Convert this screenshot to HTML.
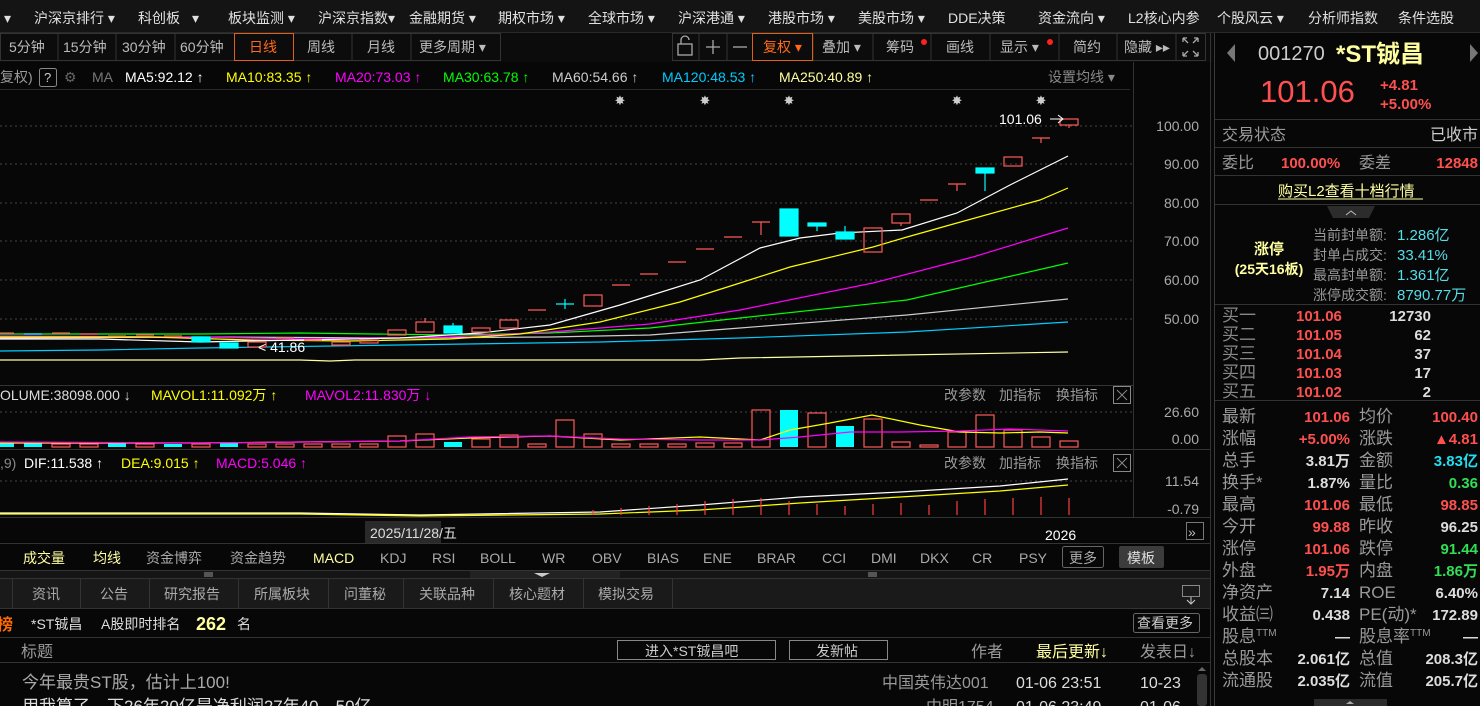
<!DOCTYPE html>
<html><head><meta charset="utf-8"><style>
html,body{margin:0;padding:0;background:#070707;width:1480px;height:706px;overflow:hidden}
svg{display:block}
text{font-family:"Liberation Sans","Noto Sans CJK SC",sans-serif}
</style></head><body>
<svg width="1480" height="706" viewBox="0 0 1480 706" xmlns="http://www.w3.org/2000/svg">
<rect width="1480" height="706" fill="#070707"/>
<rect x="0" y="0" width="1480" height="33" fill="#141414"/>
<line x1="0" y1="32.5" x2="1480" y2="32.5" stroke="#2a2a2a"/>
<g font-size="14" fill="#e0e0e0">
<text x="4" y="23">▾</text>
<text x="34" y="23">沪深京排行 ▾</text><text x="138" y="23">科创板</text><text x="192" y="23">▾</text>
<text x="228" y="23">板块监测 ▾</text><text x="318" y="23">沪深京指数▾</text><text x="409" y="23">金融期货 ▾</text>
<text x="498" y="23">期权市场 ▾</text><text x="588" y="23">全球市场 ▾</text><text x="678" y="23">沪深港通 ▾</text>
<text x="768" y="23">港股市场 ▾</text><text x="858" y="23">美股市场 ▾</text><text x="948" y="23">DDE决策</text>
<text x="1038" y="23">资金流向 ▾</text><text x="1128" y="23">L2核心内参</text><text x="1217" y="23">个股风云 ▾</text>
<text x="1308" y="23">分析师指数</text><text x="1398" y="23">条件选股</text>
</g>
<rect x="0" y="33" width="1213" height="29" fill="#0c0c0c"/>
<g fill="none" stroke="#333">
<rect x="0.5" y="33.5" width="500" height="27"/>
<line x1="58" y1="33" x2="58" y2="61"/><line x1="116" y1="33" x2="116" y2="61"/><line x1="175" y1="33" x2="175" y2="61"/>
<line x1="352" y1="33" x2="352" y2="61"/><line x1="411" y1="33" x2="411" y2="61"/>
<rect x="672.5" y="33.5" width="533" height="27"/>
<line x1="699" y1="33" x2="699" y2="61"/><line x1="727" y1="33" x2="727" y2="61"/>
<line x1="813" y1="33" x2="813" y2="61"/><line x1="873" y1="33" x2="873" y2="61"/><line x1="931" y1="33" x2="931" y2="61"/>
<line x1="990" y1="33" x2="990" y2="61"/><line x1="1059" y1="33" x2="1059" y2="61"/><line x1="1117" y1="33" x2="1117" y2="61"/><line x1="1176" y1="33" x2="1176" y2="61"/>
</g>
<rect x="234.5" y="33.5" width="59" height="27" fill="none" stroke="#e0601a"/>
<rect x="752.5" y="33.5" width="60" height="27" fill="none" stroke="#e0601a"/>
<g font-size="14" fill="#bbb">
<text x="9" y="52">5分钟</text><text x="63" y="52">15分钟</text><text x="122" y="52">30分钟</text><text x="180" y="52">60分钟</text>
<text x="249" y="52" fill="#ff6a1a">日线</text><text x="307" y="52">周线</text><text x="367" y="52">月线</text><text x="419" y="52">更多周期 ▾</text>
<text x="763" y="52" fill="#ff6a1a">复权 ▾</text><text x="822" y="52">叠加 ▾</text><text x="886" y="52">筹码</text>
<text x="946" y="52">画线</text><text x="1000" y="52">显示 ▾</text><text x="1073" y="52">简约</text><text x="1124" y="52">隐藏 ▸▸</text>
</g>
<circle cx="924" cy="42" r="3" fill="#ff2020"/><circle cx="1050" cy="42" r="3" fill="#ff2020"/>
<g stroke="#aaa" fill="none" stroke-width="1.3">
<rect x="678" y="44" width="14" height="11"/><path d="M681 44 v-4 a4 4 0 0 1 8 0"/>
<path d="M713 40 v14 M706 47 h14"/><path d="M733 47 h14"/>
<path d="M1183 38 l5 5 M1183 38 h4 M1183 38 v4 M1198 38 l-5 5 M1198 38 h-4 M1198 38 v4 M1183 56 l5 -5 M1183 56 h4 M1183 56 v-4 M1198 56 l-5 -5 M1198 56 h-4 M1198 56 v-4"/>
</g>
<g font-size="14">
<text x="0" y="82" fill="#999">复权)</text>
<rect x="39.5" y="68.5" width="17" height="18" fill="none" stroke="#888" rx="2"/><text x="44" y="82" fill="#ccc" font-size="13">?</text>
<text x="64" y="82" fill="#666">⚙</text><text x="92" y="82" fill="#777">MA</text>
<text x="125" y="82" fill="#fff">MA5:92.12 ↑</text>
<text x="226" y="82" fill="#ffff00">MA10:83.35 ↑</text>
<text x="335" y="82" fill="#ff00ff">MA20:73.03 ↑</text>
<text x="443" y="82" fill="#00ff00">MA30:63.78 ↑</text>
<text x="552" y="82" fill="#cccccc">MA60:54.66 ↑</text>
<text x="662" y="82" fill="#00ccff">MA120:48.53 ↑</text>
<text x="779" y="82" fill="#ffffa0">MA250:40.89 ↑</text>
<text x="1048" y="82" fill="#888">设置均线 ▾</text>
</g>
<line x1="0" y1="89.5" x2="1130" y2="89.5" stroke="#2a2a2a"/>
<g stroke="#444" stroke-dasharray="2 3">
<line x1="0" y1="126" x2="1133" y2="126"/><line x1="0" y1="164" x2="1133" y2="164"/><line x1="0" y1="203" x2="1133" y2="203"/>
<line x1="0" y1="241" x2="1133" y2="241"/><line x1="0" y1="280" x2="1133" y2="280"/><line x1="0" y1="319" x2="1133" y2="319"/>
<line x1="0" y1="412" x2="1133" y2="412"/><line x1="0" y1="481" x2="1133" y2="481"/>
</g>
<g stroke="#333">
<line x1="1133.5" y1="62" x2="1133.5" y2="518"/>
<line x1="0" y1="385.5" x2="1133" y2="385.5"/><line x1="0" y1="449.5" x2="1133" y2="449.5"/><line x1="0" y1="517.5" x2="1133" y2="517.5"/>
<line x1="1133" y1="449.5" x2="1210" y2="449.5"/><line x1="1133" y1="517.5" x2="1210" y2="517.5"/>
<line x1="1210.5" y1="33" x2="1210.5" y2="706"/>
</g>
<line x1="1214.5" y1="33" x2="1214.5" y2="706" stroke="#3a3a3a"/>
<g font-size="14" fill="#aaa" text-anchor="end">
<text x="1199" y="131">100.00</text><text x="1199" y="169">90.00</text><text x="1199" y="208">80.00</text>
<text x="1199" y="246">70.00</text><text x="1199" y="285">60.00</text><text x="1199" y="324">50.00</text>
<text x="1199" y="417">26.60</text><text x="1199" y="444">0.00</text>
<text x="1199" y="486">11.54</text><text x="1199" y="514">-0.79</text>
</g>
<g font-size="13" fill="#ccc" text-anchor="middle">
<text x="620" y="105">✸</text><text x="705" y="105">✸</text><text x="789" y="105">✸</text><text x="957" y="105">✸</text><text x="1041" y="105">✸</text>
</g>
<g fill="none" stroke-width="1.2">
<polyline stroke="#ffffa0" points="0,360 300,360 330,361 355,360 700,360 740,358 1068,352"/>
<polyline stroke="#00ccff" points="0,351 100,350 200,348 400,345 600,342 740,338 907,332 1068,322"/>
<polyline stroke="#cccccc" points="0,338 200,337 400,338 550,337 650,335 740,328 907,315 1068,299"/>
<polyline stroke="#00ff00" points="0,334 200,334 300,333 450,335 550,333 650,328 740,318 907,300 1068,263"/>
<polyline stroke="#ff00ff" points="0,336 200,337 300,339 450,337 550,332 650,324 740,310 873,283 973,257 1068,228"/>
<polyline stroke="#ffff00" points="0,337 150,337 250,340 350,341 450,339 520,334 600,322 680,302 740,283 790,267 873,247 907,237 957,223 1040,200 1068,188"/>
<polyline stroke="#ffffff" points="0,339 100,339 200,342 300,340 400,338 480,333 550,325 620,305 700,280 760,248 800,238 840,233 902,230 957,213 1010,185 1068,156"/>
</g>
<g stroke="#ff5a5a" fill="none" stroke-width="1.2">
<rect x="1060" y="119" width="18" height="6"/><line x1="1069" y1="125" x2="1069" y2="128"/>
<line x1="1032" y1="138" x2="1050" y2="138"/><line x1="1041" y1="138" x2="1041" y2="143"/>
<rect x="1004" y="157" width="18" height="9"/>
<line x1="948" y1="184" x2="966" y2="184"/><line x1="957" y1="184" x2="957" y2="191"/>
<line x1="920" y1="200" x2="938" y2="200"/>
<rect x="892" y="214" width="18" height="9"/><line x1="901" y1="223" x2="901" y2="226"/>
<rect x="864" y="228" width="18" height="24"/>
<line x1="752" y1="222" x2="770" y2="222"/><line x1="761" y1="222" x2="761" y2="235"/>
<line x1="724" y1="237" x2="742" y2="237"/><line x1="696" y1="249" x2="714" y2="249"/>
<line x1="668" y1="262" x2="686" y2="262"/><line x1="640" y1="274" x2="658" y2="274"/>
<line x1="612" y1="285" x2="630" y2="285"/>
<rect x="584" y="295" width="18" height="11"/>
<line x1="528" y1="310" x2="546" y2="310"/>
<rect x="500" y="320" width="18" height="8"/><rect x="472" y="328" width="18" height="4"/>
<rect x="416" y="322" width="18" height="10"/><line x1="425" y1="318" x2="425" y2="322"/>
<rect x="388" y="330" width="18" height="5"/><rect x="360" y="340" width="18" height="3"/><rect x="332" y="342" width="18" height="3"/>
<line x1="304" y1="340" x2="322" y2="340"/><line x1="276" y1="338" x2="294" y2="338"/>
<rect x="248" y="342" width="18" height="5"/>
<line x1="164" y1="336" x2="182" y2="336"/><line x1="136" y1="335" x2="154" y2="335"/><line x1="108" y1="336" x2="126" y2="336"/>
<line x1="80" y1="334" x2="98" y2="334"/><line x1="52" y1="333" x2="70" y2="333"/><line x1="0" y1="333" x2="14" y2="333"/>
</g>
<g fill="#00ffff" stroke="#00ffff" stroke-width="1.2">
<rect x="976" y="168" width="18" height="5"/><line x1="985" y1="173" x2="985" y2="191"/>
<rect x="836" y="232" width="18" height="7"/><line x1="845" y1="226" x2="845" y2="232"/>
<rect x="808" y="223" width="18" height="3"/><line x1="817" y1="226" x2="817" y2="231"/>
<rect x="780" y="209" width="18" height="27"/>
<line x1="556" y1="304" x2="574" y2="304"/><line x1="565" y1="299" x2="565" y2="309"/>
<rect x="444" y="326" width="18" height="7"/><line x1="453" y1="323" x2="453" y2="326"/>
<rect x="220" y="343" width="18" height="5"/><rect x="192" y="337" width="18" height="5"/>
<line x1="24" y1="334" x2="42" y2="334"/>
</g>
<text x="999" y="124" font-size="14" fill="#fff">101.06</text>
<path d="M1050 119 h13 M1058 115 l5 4 l-5 4" stroke="#fff" fill="none"/>
<text x="258" y="352" font-size="14" fill="#fff">&lt; 41.86</text>
<g font-size="14">
<text x="0" y="400" fill="#ddd">OLUME:38098.000 ↓</text>
<text x="151" y="400" fill="#ffff00">MAVOL1:11.092万 ↑</text>
<text x="305" y="400" fill="#ff00ff">MAVOL2:11.830万 ↓</text>
<text x="944" y="400" fill="#999">改参数</text><text x="999" y="400" fill="#999">加指标</text><text x="1056" y="400" fill="#999">换指标</text>
<text x="944" y="468" fill="#999">改参数</text><text x="999" y="468" fill="#999">加指标</text><text x="1056" y="468" fill="#999">换指标</text>
<text x="0" y="468" fill="#888">,9)</text>
<text x="24" y="468" fill="#fff">DIF:11.538 ↑</text>
<text x="121" y="468" fill="#ffff00">DEA:9.015 ↑</text>
<text x="216" y="468" fill="#ff00ff">MACD:5.046 ↑</text>
</g>
<g fill="none" stroke="#888"><rect x="1113.5" y="386.5" width="17" height="17"/><path d="M1117 390 l10 10 M1127 390 l-10 10"/>
<rect x="1113.5" y="454.5" width="17" height="17"/><path d="M1117 458 l10 10 M1127 458 l-10 10"/></g>
<g stroke="#ff5a5a" fill="none" stroke-width="1.2">
<rect x="1060" y="441" width="18" height="6"/><rect x="1032" y="437" width="18" height="10"/><rect x="1004" y="430" width="18" height="17"/>
<rect x="976" y="415" width="18" height="32"/><rect x="948" y="432" width="18" height="15"/><rect x="920" y="445" width="18" height="2"/>
<rect x="892" y="442" width="18" height="5"/><rect x="864" y="419" width="18" height="28"/><rect x="808" y="413" width="18" height="34"/>
<rect x="752" y="410" width="18" height="37"/><rect x="724" y="443" width="18" height="4"/><rect x="696" y="443" width="18" height="4"/>
<rect x="584" y="434" width="18" height="13"/><rect x="556" y="420" width="18" height="27"/><rect x="500" y="435" width="18" height="12"/>
<rect x="472" y="439" width="18" height="8"/><rect x="416" y="434" width="18" height="13"/><rect x="388" y="436" width="18" height="11"/>
<rect x="528" y="444" width="18" height="3"/><rect x="612" y="444" width="18" height="3"/><rect x="640" y="444" width="18" height="3"/><rect x="668" y="444" width="18" height="3"/>
<rect x="360" y="444" width="18" height="3"/><rect x="332" y="444" width="18" height="3"/><rect x="304" y="444" width="18" height="3"/><rect x="276" y="444" width="18" height="3"/><rect x="248" y="444" width="18" height="3"/>
<rect x="192" y="444" width="18" height="3"/><rect x="136" y="444" width="18" height="3"/><rect x="80" y="444" width="18" height="3"/><rect x="52" y="444" width="18" height="3"/>
</g>
<g fill="#00ffff">
<rect x="836" y="426" width="18" height="21"/><rect x="780" y="410" width="18" height="37"/><rect x="444" y="442" width="18" height="5"/>
<rect x="220" y="443" width="18" height="4"/><rect x="164" y="444" width="18" height="3"/><rect x="108" y="443" width="18" height="4"/><rect x="24" y="443" width="18" height="4"/><rect x="0" y="443" width="14" height="4"/>
</g>
<g fill="none" stroke-width="1.2">
<polyline stroke="#ffff00" points="0,443 200,443 300,442 400,441 470,438 550,436 620,440 700,437 760,440 790,430 830,423 872,415 920,425 960,432 1000,433 1040,432 1068,433"/>
<polyline stroke="#ff00ff" points="0,442 200,443 300,442 400,441 470,437 550,436 620,439 700,440 760,440 800,437 850,432 900,432 960,431 1010,429 1068,431"/>
</g>
<g fill="none" stroke-width="1.2">
<polyline stroke="#fff" points="0,513 300,513 420,515 600,512 700,505 800,497 900,492 1000,486 1068,479"/>
<polyline stroke="#ffff00" points="0,514 300,514 420,516 600,514 700,510 800,503 900,497 1000,491 1068,485"/>
</g>
<g stroke="#ff4040" stroke-width="1.2">
<line x1="1069" y1="498" x2="1069" y2="515"/><line x1="1041" y1="497" x2="1041" y2="515"/><line x1="1013" y1="498" x2="1013" y2="515"/>
<line x1="985" y1="499" x2="985" y2="515"/><line x1="957" y1="501" x2="957" y2="515"/><line x1="929" y1="505" x2="929" y2="515"/>
<line x1="901" y1="503" x2="901" y2="515"/><line x1="873" y1="504" x2="873" y2="515"/><line x1="845" y1="506" x2="845" y2="515"/>
<line x1="817" y1="504" x2="817" y2="515"/><line x1="789" y1="501" x2="789" y2="515"/><line x1="761" y1="498" x2="761" y2="515"/>
<line x1="733" y1="499" x2="733" y2="515"/><line x1="705" y1="501" x2="705" y2="515"/><line x1="677" y1="504" x2="677" y2="515"/>
<line x1="649" y1="506" x2="649" y2="515"/><line x1="621" y1="508" x2="621" y2="515"/><line x1="593" y1="510" x2="593" y2="515"/>
</g>
<rect x="365" y="521" width="76" height="22" fill="#2a2a2a"/>
<text x="370" y="538" font-size="14" fill="#ddd">2025/11/28/五</text>
<text x="1045" y="540" font-size="14" fill="#fff">2026</text>
<rect x="1186.5" y="522.5" width="17" height="17" fill="none" stroke="#777"/>
<text x="1188" y="537" font-size="14" fill="#bbb">»</text>
<line x1="0" y1="543.5" x2="1210" y2="543.5" stroke="#333"/>
<g font-size="14" fill="#aaa">
<text x="23" y="563" fill="#ffffa0">成交量</text><text x="93" y="563" fill="#ffffa0">均线</text>
<text x="146" y="563">资金博弈</text><text x="230" y="563">资金趋势</text><text x="313" y="563" fill="#ffffa0">MACD</text>
<text x="380" y="563">KDJ</text><text x="432" y="563">RSI</text><text x="480" y="563">BOLL</text><text x="542" y="563">WR</text>
<text x="592" y="563">OBV</text><text x="647" y="563">BIAS</text><text x="703" y="563">ENE</text><text x="757" y="563">BRAR</text>
<text x="822" y="563">CCI</text><text x="871" y="563">DMI</text><text x="920" y="563">DKX</text><text x="972" y="563">CR</text><text x="1019" y="563">PSY</text>
</g>
<rect x="1062.5" y="546.5" width="41" height="21" fill="none" stroke="#666" rx="2"/><text x="1069" y="563" font-size="14" fill="#aaa">更多</text>
<rect x="1119" y="546" width="45" height="22" fill="#3c3c3c" rx="2"/><text x="1127" y="563" font-size="14" fill="#ddd">模板</text>
<line x1="0" y1="570.5" x2="1210" y2="570.5" stroke="#333"/>
<rect x="0" y="571" width="1210" height="7" fill="#151515"/>
<rect x="470" y="571" width="150" height="7" fill="#222"/>
<rect x="204" y="572" width="9" height="5" fill="#555"/><rect x="868" y="572" width="9" height="5" fill="#555"/>
<path d="M534 573 h16 l-8 4 z" fill="#ccc"/>
<rect x="0" y="579" width="1210" height="29" fill="#1a1a1a"/>
<line x1="0" y1="578.5" x2="1210" y2="578.5" stroke="#333"/><line x1="0" y1="608.5" x2="1210" y2="608.5" stroke="#333"/>
<g stroke="#333"><line x1="12.5" y1="579" x2="12.5" y2="608"/><line x1="80.5" y1="579" x2="80.5" y2="608"/><line x1="149.5" y1="579" x2="149.5" y2="608"/><line x1="238.5" y1="579" x2="238.5" y2="608"/><line x1="328.5" y1="579" x2="328.5" y2="608"/><line x1="403.5" y1="579" x2="403.5" y2="608"/><line x1="493.5" y1="579" x2="493.5" y2="608"/><line x1="583.5" y1="579" x2="583.5" y2="608"/><line x1="672.5" y1="579" x2="672.5" y2="608"/></g>
<g font-size="14" fill="#aaa">
<text x="32" y="599">资讯</text><text x="100" y="599">公告</text><text x="164" y="599">研究报告</text><text x="254" y="599">所属板块</text>
<text x="344" y="599">问董秘</text><text x="419" y="599">关联品种</text><text x="509" y="599">核心题材</text><text x="598" y="599">模拟交易</text>
</g>
<rect x="1182.5" y="585.5" width="17" height="11" fill="none" stroke="#888"/><path d="M1191 597 v6 M1187 600 l4 4 l4 -4" stroke="#ccc" fill="none"/>
<text x="-3" y="630" font-size="16" fill="#ff6a00" font-weight="bold">榜</text>
<text x="31" y="629" font-size="14" fill="#ddd">*ST铖昌</text>
<text x="101" y="629" font-size="14" fill="#ddd">A股即时排名</text>
<text x="196" y="630" font-size="18" fill="#ffffa0" font-weight="bold">262</text>
<text x="237" y="629" font-size="14" fill="#ddd">名</text>
<rect x="1133.5" y="613.5" width="66" height="19" fill="none" stroke="#666" rx="2"/><text x="1137" y="628" font-size="14" fill="#ccc">查看更多</text>
<line x1="0" y1="637.5" x2="1210" y2="637.5" stroke="#333"/>
<text x="21" y="657" font-size="16" fill="#999">标题</text>
<rect x="617.5" y="640.5" width="158" height="19" fill="none" stroke="#888"/><text x="645" y="656" font-size="14" fill="#ccc">进入*ST铖昌吧</text>
<rect x="789.5" y="640.5" width="98" height="19" fill="none" stroke="#888"/><text x="816" y="656" font-size="14" fill="#ccc">发新帖</text>
<text x="971" y="657" font-size="16" fill="#999">作者</text>
<text x="1036" y="657" font-size="16" fill="#ffffa0">最后更新↓</text>
<text x="1140" y="657" font-size="16" fill="#999">发表日↓</text>
<line x1="0" y1="662.5" x2="1210" y2="662.5" stroke="#333"/>
<text x="22" y="688" font-size="17" fill="#aaa">今年最贵ST股，估计上100!</text>
<text x="882" y="688" font-size="16" fill="#999">中国英伟达001</text>
<text x="1016" y="688" font-size="16" fill="#ddd">01-06 23:51</text>
<text x="1140" y="688" font-size="16" fill="#ddd">10-23</text>
<text x="22" y="712" font-size="17" fill="#ddd">用我算了，下26年20亿是净利润27年40，50亿</text>
<text x="926" y="712" font-size="16" fill="#999">中明1754</text>
<text x="1016" y="712" font-size="16" fill="#ddd">01-06 23:49</text>
<text x="1140" y="712" font-size="16" fill="#ddd">01-06</text>
<rect x="1197" y="674" width="10" height="32" fill="#333" rx="3"/><path d="M1198 671 l4 -4 l4 4 z" fill="#666"/>
<path d="M1235 44 l-8 9 l8 9 z" fill="#777"/><path d="M1470 44 l8 9 l-8 9 z" fill="#777"/>
<text x="1258" y="60" font-size="20" fill="#ccc">001270</text>
<text x="1336" y="62" font-size="24" fill="#ffffa0" font-weight="bold">*ST铖昌</text>
<text x="1260" y="102" font-size="31" fill="#ff5050">101.06</text>
<text x="1380" y="90" font-size="15" fill="#ff5050" font-weight="bold">+4.81</text>
<text x="1380" y="109" font-size="15" fill="#ff5050" font-weight="bold">+5.00%</text>
<g stroke="#333"><line x1="1215" y1="119.5" x2="1480" y2="119.5"/><line x1="1215" y1="147.5" x2="1480" y2="147.5"/><line x1="1215" y1="175.5" x2="1480" y2="175.5"/><line x1="1215" y1="204.5" x2="1480" y2="204.5"/><line x1="1215" y1="304.5" x2="1480" y2="304.5"/><line x1="1215" y1="400.5" x2="1480" y2="400.5"/></g>
<text x="1222" y="140" font-size="16" fill="#999">交易状态</text><text x="1478" y="140" font-size="16" fill="#ccc" text-anchor="end">已收市</text>
<text x="1222" y="168" font-size="16" fill="#999">委比</text><text x="1281" y="168" font-size="15" fill="#ff5050" font-weight="bold">100.00%</text>
<text x="1359" y="168" font-size="16" fill="#999">委差</text><text x="1478" y="168" font-size="15" fill="#ff5050" font-weight="bold" text-anchor="end">12848</text>
<text x="1278" y="196" font-size="15" fill="#ffffa0">购买L2查看十档行情</text>
<line x1="1278" y1="199" x2="1423" y2="199" stroke="#ffffa0"/>
<path d="M1327 206 h48 l-6 12 h-36 z" fill="#2c2c2c"/><path d="M1346 215 l5 -4 l5 4" stroke="#bbb" fill="none"/>
<text x="1269" y="254" font-size="15" fill="#ffffa0" font-weight="bold" text-anchor="middle">涨停</text>
<text x="1269" y="274" font-size="14" fill="#ffffa0" font-weight="bold" text-anchor="middle">(25天16板)</text>
<g font-size="14" fill="#999"><text x="1313" y="240">当前封单额:</text><text x="1313" y="260">封单占成交:</text><text x="1313" y="280">最高封单额:</text><text x="1313" y="300">涨停成交额:</text></g>
<g font-size="15" fill="#55dde8"><text x="1397" y="240">1.286亿</text><text x="1397" y="260">33.41%</text><text x="1397" y="280">1.361亿</text><text x="1397" y="300">8790.77万</text></g>
<g font-size="17" fill="#888"><text x="1222" y="321">买一</text><text x="1222" y="340">买二</text><text x="1222" y="359">买三</text><text x="1222" y="378">买四</text><text x="1222" y="397">买五</text></g>
<g font-size="15" fill="#ff5050" font-weight="bold"><text x="1296" y="321">101.06</text><text x="1296" y="340">101.05</text><text x="1296" y="359">101.04</text><text x="1296" y="378">101.03</text><text x="1296" y="397">101.02</text></g>
<g font-size="15" fill="#ddd" font-weight="bold" text-anchor="end"><text x="1431" y="321">12730</text><text x="1431" y="340">62</text><text x="1431" y="359">37</text><text x="1431" y="378">17</text><text x="1431" y="397">2</text></g>
<g font-size="17" fill="#999">
<text x="1222" y="422">最新</text><text x="1222" y="444">涨幅</text><text x="1222" y="466">总手</text><text x="1222" y="488">换手*</text>
<text x="1222" y="510">最高</text><text x="1222" y="532">今开</text><text x="1222" y="554">涨停</text><text x="1222" y="576">外盘</text>
<text x="1222" y="598">净资产</text><text x="1222" y="620">收益㈢</text><text x="1222" y="642">股息<tspan font-size="10" dy="-6">TTM</tspan></text><text x="1222" y="664">总股本</text><text x="1222" y="686">流通股</text>
<text x="1359" y="422">均价</text><text x="1359" y="444">涨跌</text><text x="1359" y="466">金额</text><text x="1359" y="488">量比</text>
<text x="1359" y="510">最低</text><text x="1359" y="532">昨收</text><text x="1359" y="554">跌停</text><text x="1359" y="576">内盘</text>
<text x="1359" y="598">ROE</text><text x="1359" y="620">PE(动)*</text><text x="1359" y="642">股息率<tspan font-size="10" dy="-6">TTM</tspan></text><text x="1359" y="664">总值</text><text x="1359" y="686">流值</text>
</g>
<g font-size="15" font-weight="bold" text-anchor="end">
<text x="1350" y="422" fill="#ff5050">101.06</text><text x="1350" y="444" fill="#ff5050">+5.00%</text><text x="1350" y="466" fill="#ddd">3.81万</text><text x="1350" y="488" fill="#ddd">1.87%</text>
<text x="1350" y="510" fill="#ff5050">101.06</text><text x="1350" y="532" fill="#ff5050">99.88</text><text x="1350" y="554" fill="#ff5050">101.06</text><text x="1350" y="576" fill="#ff5050">1.95万</text>
<text x="1350" y="598" fill="#ddd">7.14</text><text x="1350" y="620" fill="#ddd">0.438</text><text x="1350" y="642" fill="#ddd">—</text><text x="1350" y="664" fill="#ddd">2.061亿</text><text x="1350" y="686" fill="#ddd">2.035亿</text>
<text x="1478" y="422" fill="#ff5050">100.40</text><text x="1478" y="444" fill="#ff5050">▲4.81</text><text x="1478" y="466" fill="#22ddee">3.83亿</text><text x="1478" y="488" fill="#33dd55">0.36</text>
<text x="1478" y="510" fill="#ff5050">98.85</text><text x="1478" y="532" fill="#ddd">96.25</text><text x="1478" y="554" fill="#33dd55">91.44</text><text x="1478" y="576" fill="#33dd55">1.86万</text>
<text x="1478" y="598" fill="#ddd">6.40%</text><text x="1478" y="620" fill="#ddd">172.89</text><text x="1478" y="642" fill="#ddd">—</text><text x="1478" y="664" fill="#ddd">208.3亿</text><text x="1478" y="686" fill="#ddd">205.7亿</text>
</g>
<rect x="1314" y="699" width="73" height="7" fill="#2c2c2c"/><path d="M1346 704 l4 -3 l4 3 z" fill="#aaa"/>
</svg>
</body></html>
